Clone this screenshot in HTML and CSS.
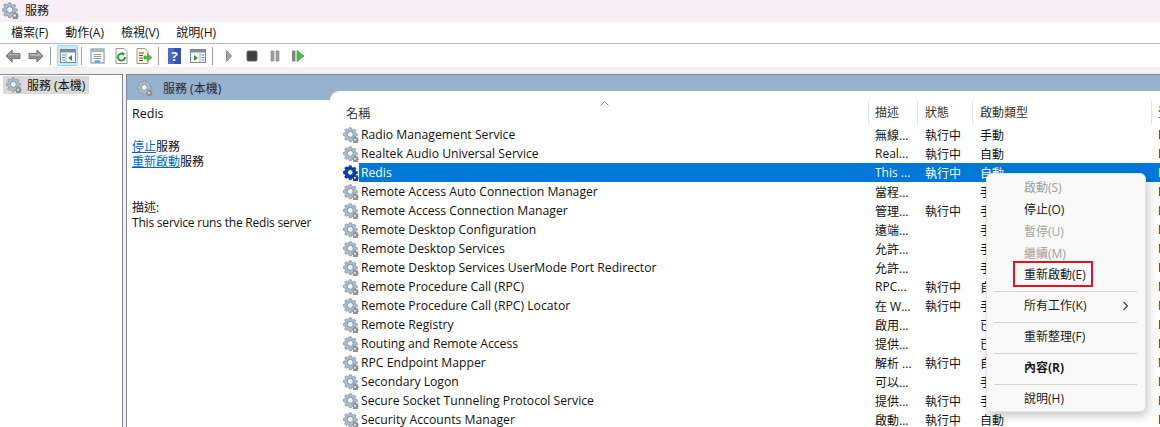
FILE: index.html
```html
<!DOCTYPE html>
<html lang="zh-Hant">
<head>
    <meta charset="UTF-8">
    <title>服務</title>
    <link rel="stylesheet" href="styles.css">
</head>
<body>
    <svg class="defs" width="0" height="0">
        <defs>
            <symbol id="gear" viewBox="0 0 18 18">
                <path d="M7 .8h2.400l.4 1.900 1.500.6 1.700-1 1.600 1.600-1 1.700.6 1.500 1.900.4v2.400l-1.900.4-.6 1.500 1 1.700-1.600 1.600-1.700-1-1.500.6-.4 1.900H7l-.4-1.900-1.500-.6-1.700 1-1.600-1.600 1-1.700-.6-1.500L.3 9.500V7.100l1.900-.4.6-1.500-1-1.700 1.600-1.600 1.700 1 1.500-.6z" fill="#a9bdd0" stroke="#7d8ea0" stroke-width=".7"/>
                <circle cx="8.200" cy="8.300" r="3.300" fill="#f4f8fb" stroke="#6f8296" stroke-width=".9"/>
                <path d="M12.500 10.500h1.800l.2 1 .8.3.8-.5 1 1-.5.8.3.8.7.2v1.500l-.7.2-.3.8.5.8-1 1H12l-1-1 .5-.8-.3-.8-.8-.2v-1.500l.8-.2.3-.8-.5-.8 1-1 .7.5z" fill="#8d8f92"/>
                <circle cx="13.400" cy="14.400" r="1.300" fill="#e8e8e8"/>
            </symbol>
            <symbol id="gear-on" viewBox="0 0 18 18">
                <path d="M7 .8h2.400l.4 1.900 1.500.6 1.700-1 1.600 1.600-1 1.700.6 1.500 1.900.4v2.400l-1.900.4-.6 1.500 1 1.700-1.600 1.600-1.700-1-1.500.6-.4 1.900H7l-.4-1.900-1.500-.6-1.700 1-1.600-1.600 1-1.700-.6-1.500L.3 9.500V7.100l1.900-.4.6-1.500-1-1.700 1.600-1.600 1.700 1 1.500-.6z" fill="#0a3fa8" stroke="#062a78" stroke-width=".7"/>
                <circle cx="8.200" cy="8.300" r="3.100" fill="#eaf2fb" stroke="#06246b" stroke-width=".9"/>
                <path d="M12.500 10.500h1.800l.2 1 .8.3.8-.5 1 1-.5.8.3.8.7.2v1.500l-.7.2-.3.8.5.8-1 1H12l-1-1 .5-.8-.3-.8-.8-.2v-1.500l.8-.2.3-.8-.5-.8 1-1 .7.5z" fill="#0b3d9e"/>
                <circle cx="13.400" cy="14.400" r="1.200" fill="#d9e6f7"/>
            </symbol>
        </defs>
    </svg>

    <div class="titlebar">
        <svg class="gear-title"><use href="#gear"/></svg>
        <span>服務</span>
    </div>

    <div class="menubar">
        <span>檔案(F)</span>
        <span>動作(A)</span>
        <span>檢視(V)</span>
        <span>說明(H)</span>
    </div>

    <div class="toolbar">
        <svg class="tool t-back" viewBox="0 0 18 16"><path d="M1 8l7-7v4h9v6H8v4z" fill="#8f8f8f" stroke="#6b6b6b"/><path d="M3 8l4-4v2h9v1H6z" fill="#b5b5b5"/></svg>
        <svg class="tool t-next" viewBox="0 0 18 16"><path d="M17 8l-7-7v4H1v6h9v4z" fill="#8f8f8f" stroke="#6b6b6b"/><path d="M2 6h9V4l4 4H2z" fill="#b5b5b5"/></svg>
        <i class="sep sep-1"></i>
        <span class="tool-on">
            <svg class="tool t-pane" viewBox="0 0 16 16"><rect x=".5" y="1.500" width="15" height="13" fill="#fff" stroke="#7a8794"/><rect x="1" y="2" width="14" height="2.500" fill="#7e8e9e"/><path d="M6 5v9" stroke="#9aa6b2"/><path d="M2 7h3M2 9.500h3M2 12h3" stroke="#4d88b8"/><path d="M12 7v6l-4-3z" fill="#2c9d3c"/></svg>
        </span>
        <i class="sep sep-2"></i>
        <svg class="tool t-list" viewBox="0 0 16 16" preserveAspectRatio="none"><rect x="1" y="1" width="14" height="14" fill="#f2f4f6" stroke="#7d8894"/><rect x="1.500" y="1.500" width="13" height="2.500" fill="#a9b4bf"/><path d="M4 6.500h8M4 8.500h8M4 10.500h8" stroke="#8f9aa5"/><path d="M5 13.500h6" stroke="#35a7e0" stroke-width="2"/></svg>
        <svg class="tool t-refresh" viewBox="1.500 0 13 16"><path d="M2.500.5h8l3 3v12h-11z" fill="#fbfbf8" stroke="#9a9a9a"/><path d="M11.500 9a3.500 3.500 0 1 1-1.500-2.800" fill="none" stroke="#2f9e3a" stroke-width="2"/><path d="M8.500 4l3 1.500-2 2.500z" fill="#2f9e3a"/></svg>
        <svg class="tool t-export" viewBox="0 0 16 16"><path d="M.5.500h8l3 3v12H.5z" fill="#f7f3dc" stroke="#a09c84"/><path d="M2.500 5h5M2.500 7.500h4M2.500 10h4M2.500 12.500h4" stroke="#555"/><path d="M7.500 8H11V5.500L15.500 9.500 11 13.500V11H7.500z" fill="#58b947" stroke="#3a9430" stroke-width=".5"/></svg>
        <i class="sep sep-3"></i>
        <svg class="tool t-help" viewBox="0 0 13 16"><rect width="13" height="16" fill="#3454b4"/><rect width="6" height="16" fill="#4a6cc8"/><text x="6.500" y="13" text-anchor="middle" class="help-mark">?</text></svg>
        <svg class="tool t-pane2" viewBox="0 0 16 16"><rect x=".5" y="1.500" width="15" height="13" fill="#fff" stroke="#7a8794"/><rect x="1" y="2" width="14" height="2.500" fill="#7e8e9e"/><path d="M10 5v9" stroke="#9aa6b2"/><path d="M11.500 7h3M11.500 9.500h3M11.500 12h3" stroke="#4d88b8"/><path d="M4 7v6l4-3z" fill="#2c9d3c"/></svg>
        <i class="sep sep-4"></i>
        <svg class="media" viewBox="0 0 14 14"><path d="M4.500 1.500l5 5.500-5 5.500z" fill="#a3a3a3" stroke="#8a8a8a"/></svg>
        <svg class="media" viewBox="0 0 14 14"><rect x="2" y="2" width="10" height="10" rx="1" fill="#3f3f3f" stroke="#6a6a6a"/></svg>
        <svg class="media" viewBox="0 0 14 14"><path d="M3 2h3v10H3zM8 2h3v10H8z" fill="#a0a0a0" stroke="#808080" stroke-width=".6"/></svg>
        <svg class="media" viewBox="0 0 14 14"><path d="M1.500 2h2.500v10H1.500z" fill="#8a8a8a" stroke="#555" stroke-width=".6"/><path d="M6 1.500l7 5.500-7 5.500z" fill="#3cc03c" stroke="#229a22" stroke-width=".6"/></svg>
    </div>

    <div class="band"></div>

    <div class="workspace">
        <aside class="tree">
            <div class="tree-item">
                <svg class="gear"><use href="#gear"/></svg>
                <span>服務 (本機)</span>
            </div>
        </aside>

        <main class="pane">
            <div class="pane-head">
                <svg class="gear"><use href="#gear"/></svg>
                <span>服務 (本機)</span>
            </div>
            <div class="pane-body">
                <section class="detail">
                    <h3>Redis</h3>
                    <p class="actions"><a>停止</a>服務<br><a>重新啟動</a>服務</p>
                    <p class="desc">描述:<br><span>This service runs the Redis server</span></p>
                </section>

                <section class="list">
                    <div class="sort-mark"><svg width="9" height="5" viewBox="0 0 9 5"><path d="M.5 4.500l4-4 4 4" fill="none" stroke="#8a8a8a"/></svg></div>
                    <div class="row head">
                        <span class="name">名稱</span>
                        <span class="d">描述</span>
                        <span class="s">狀態</span>
                        <span class="t">啟動類型</span>
                        <span class="l">登入身分</span>
                    </div>
                    <div class="row"><svg class="gear"><use href="#gear"/></svg><span class="name">Radio Management Service</span><span class="d">無線...</span><span class="s">執行中</span><span class="t">手動</span><span class="l">Local System</span></div>
                    <div class="row"><svg class="gear"><use href="#gear"/></svg><span class="name">Realtek Audio Universal Service</span><span class="d">Real...</span><span class="s">執行中</span><span class="t">自動</span><span class="l">Local System</span></div>
                    <div class="row selected"><svg class="gear"><use href="#gear-on"/></svg><span class="name">Redis</span><span class="d">This ...</span><span class="s">執行中</span><span class="t">自動</span><span class="l">Local System</span></div>
                    <div class="row"><svg class="gear"><use href="#gear"/></svg><span class="name">Remote Access Auto Connection Manager</span><span class="d">當程...</span><span class="s"></span><span class="t">手動</span><span class="l">Local System</span></div>
                    <div class="row"><svg class="gear"><use href="#gear"/></svg><span class="name">Remote Access Connection Manager</span><span class="d">管理...</span><span class="s">執行中</span><span class="t">手動</span><span class="l">Local System</span></div>
                    <div class="row"><svg class="gear"><use href="#gear"/></svg><span class="name">Remote Desktop Configuration</span><span class="d">遠端...</span><span class="s"></span><span class="t">手動</span><span class="l">Local System</span></div>
                    <div class="row"><svg class="gear"><use href="#gear"/></svg><span class="name">Remote Desktop Services</span><span class="d">允許...</span><span class="s"></span><span class="t">手動</span><span class="l">Network Service</span></div>
                    <div class="row"><svg class="gear"><use href="#gear"/></svg><span class="name">Remote Desktop Services UserMode Port Redirector</span><span class="d">允許...</span><span class="s"></span><span class="t">手動</span><span class="l">Local System</span></div>
                    <div class="row"><svg class="gear"><use href="#gear"/></svg><span class="name">Remote Procedure Call (RPC)</span><span class="d">RPC...</span><span class="s">執行中</span><span class="t">自動</span><span class="l">Network Service</span></div>
                    <div class="row"><svg class="gear"><use href="#gear"/></svg><span class="name">Remote Procedure Call (RPC) Locator</span><span class="d">在 W...</span><span class="s">執行中</span><span class="t">手動</span><span class="l">Network Service</span></div>
                    <div class="row"><svg class="gear"><use href="#gear"/></svg><span class="name">Remote Registry</span><span class="d">啟用...</span><span class="s"></span><span class="t">已停用</span><span class="l">Local Service</span></div>
                    <div class="row"><svg class="gear"><use href="#gear"/></svg><span class="name">Routing and Remote Access</span><span class="d">提供...</span><span class="s"></span><span class="t">已停用</span><span class="l">Local System</span></div>
                    <div class="row"><svg class="gear"><use href="#gear"/></svg><span class="name">RPC Endpoint Mapper</span><span class="d">解析 ...</span><span class="s">執行中</span><span class="t">自動</span><span class="l">Network Service</span></div>
                    <div class="row"><svg class="gear"><use href="#gear"/></svg><span class="name">Secondary Logon</span><span class="d">可以...</span><span class="s"></span><span class="t">手動</span><span class="l">Local System</span></div>
                    <div class="row"><svg class="gear"><use href="#gear"/></svg><span class="name">Secure Socket Tunneling Protocol Service</span><span class="d">提供...</span><span class="s">執行中</span><span class="t">手動</span><span class="l">Local Service</span></div>
                    <div class="row"><svg class="gear"><use href="#gear"/></svg><span class="name">Security Accounts Manager</span><span class="d">啟動...</span><span class="s">執行中</span><span class="t">自動</span><span class="l">Local System</span></div>
                </section>
            </div>
        </main>
    </div>

    <div class="ctx">
        <div class="ctx-item off">啟動(S)</div>
        <div class="ctx-item">停止(O)</div>
        <div class="ctx-item off">暫停(U)</div>
        <div class="ctx-item off">繼續(M)</div>
        <div class="ctx-item marked">重新啟動(E)</div>
        <hr>
        <div class="ctx-item more">所有工作(K)<svg width="7" height="10" viewBox="0 0 7 10"><path d="M1.500 1l4 4-4 4" fill="none" stroke="#444" stroke-width="1.200"/></svg></div>
        <hr>
        <div class="ctx-item">重新整理(F)</div>
        <hr>
        <div class="ctx-item strong">內容(R)</div>
        <hr>
        <div class="ctx-item">說明(H)</div>
    </div>
</body>
</html>
```

FILE: styles.css
```css
* {
    box-sizing: border-box;
}

html, body {
    height: 427px;
    overflow: hidden;
}

body {
    margin: 0;
    background-color: #f0f0f0;
    color: #111;
    font-family: 'Open Sans', 'Noto Sans CJK TC', sans-serif;
    font-size: 12px;
    position: relative;
}

.defs {
    display: block;
    height: 0;
}

.titlebar {
    height: 22px;
    background-color: #f8eef6;
    display: flex;
    align-items: center;
    padding: 0 0 2px 2px;
    gap: 6px;
}

.gear-title {
    width: 17px;
    height: 17px;
}

.menubar {
    height: 22px;
    background-color: #fff;
    border-bottom: 1px solid #b9b9b9;
    display: flex;
    align-items: center;
    padding: 0 0 2px 11px;
    gap: 17px;
}

/* toolbar margins follow the button groups of the mmc snap-in */
.toolbar {
    height: 23px;
    background-color: #fff;
    display: flex;
    align-items: center;
    padding-left: 5px;
}

.tool {
    height: 16px;
    flex: none;
}

.t-back {
    width: 16px;
    height: 14px;
    margin-right: 7px;
}

.t-next {
    width: 16px;
    height: 14px;
    margin-right: 6px;
}

.t-pane {
    width: 16px;
}

.t-list {
    width: 15px;
    margin-right: 10px;
}

.t-refresh {
    width: 13px;
    margin-right: 8px;
}

.t-export {
    width: 17px;
    margin-right: 5px;
}

.t-help {
    width: 13px;
    margin-right: 9px;
}

.t-pane2 {
    width: 16px;
    margin-right: 6px;
}

.help-mark {
    fill: #fff;
    font-size: 13px;
    font-weight: 700;
}

.sep {
    width: 1px;
    height: 18px;
    background-color: #a0a0a0;
    flex: none;
}

.sep-1 {
    margin-right: 6px;
}

.sep-2 {
    margin: 0 8px 0 3px;
}

.sep-3 {
    margin-right: 9px;
}

.sep-4 {
    margin-right: 9px;
}

.tool-on {
    width: 21px;
    height: 21px;
    background-color: #cce8ff;
    border: 1px solid #99d1ff;
    border-radius: 2px;
    display: flex;
    align-items: center;
    justify-content: center;
    flex: none;
}

.media {
    width: 14px;
    height: 14px;
    margin-right: 9px;
    flex: none;
}

.band {
    height: 7px;
    background-color: #f0f0f0;
}

.workspace {
    display: flex;
    gap: 3px;
    height: 353px;
}

.tree {
    width: 123px;
    background-color: #fff;
    border: 1px solid #828790;
    border-left: 0;
    border-bottom: 0;
    padding: 1px 0 0 3px;
}

.tree-item {
    width: 86px;
    height: 18px;
    background-color: #d9d9d9;
    display: flex;
    align-items: center;
    gap: 5px;
    padding-left: 3px;
}

.gear {
    width: 16px;
    height: 16px;
    flex: none;
}

.pane {
    flex: 1;
    min-width: 0;
    border-left: 1px solid #828790;
    border-top: 1px solid #828790;
    background-color: #fff;
}

.pane-head {
    height: 25px;
    background-color: #97b2ce;
    display: flex;
    align-items: center;
    padding: 1px 0 0 10px;
    gap: 10px;
    color: #1f2a35;
}

.pane-body {
    display: flex;
    background-color: #97b2ce;
    height: 327px;
}

.detail {
    width: 203px;
    flex: none;
    background-color: #fff;
    padding: 5px 5px 0 5px;
}

.detail h3 {
    margin: 0 0 17px;
    font-size: 12.500px;
    font-weight: 400;
    line-height: 17px;
}

.detail p {
    margin: 0;
    line-height: 15px;
}

.detail a {
    color: #0066cc;
    text-decoration: underline;
}

.detail .actions {
    margin-bottom: 31px;
}

.desc span {
    letter-spacing: -0.2px;
    white-space: nowrap;
}

.list {
    flex: 1;
    min-width: 0;
    background-color: #fff;
    border-radius: 9px 0 0 0;
    margin-top: -9px;
    padding-top: 9px;
    position: relative;
    overflow: hidden;
}

.sort-mark {
    position: absolute;
    left: 270px;
    top: 10px;
    line-height: 0;
}

.row {
    height: 19px;
    display: flex;
    align-items: center;
    white-space: nowrap;
    padding-left: 13px;
}

.row .gear {
    margin-right: 2px;
}

.row span {
    flex: none;
    overflow: hidden;
}

.row .name {
    width: 514px;
    font-size: 12.200px;
}

.row .d {
    width: 50px;
}

.row .s {
    width: 55px;
}

.row .t {
    width: 178px;
}

.row.head {
    height: 25px;
    padding-left: 16px;
    color: #333;
}

.row.head .name {
    width: 522px;
}

.row.head span + span {
    border-left: 1px solid #e5e5e5;
    padding-left: 7px;
    height: 24px;
    line-height: 24px;
}

.row.head .d {
    width: 49px;
    padding-left: 6px;
}

.row.head .s {
    width: 55px;
}

.row.head .t {
    width: 179px;
}

.row.head .l {
    padding-left: 6px;
}

.row.selected {
    color: #fff;
    background: linear-gradient(90deg, #fff 29px, #0078d7 29px);
}

.ctx {
    position: absolute;
    left: 986px;
    top: 173px;
    width: 160px;
    height: 239px;
    background-color: #f9f9f9;
    border: 1px solid #e4e4e4;
    border-radius: 6px;
    box-shadow: 2px 4px 10px rgba(0, 0, 0, 0.22);
    padding-top: 3px;
}

.ctx hr {
    height: 1px;
    border: 0;
    background-color: #d4d4d4;
    margin: 5px 8px 3px 7px;
}

.ctx-item {
    height: 22px;
    line-height: 22px;
    padding-left: 37px;
    color: #1a1a1a;
}

.ctx-item.off {
    color: #a0a0a0;
}

.ctx-item.strong {
    font-weight: 700;
}

.ctx-item.more {
    display: flex;
    align-items: center;
    justify-content: space-between;
    padding-right: 16px;
    margin-top: -1px;
    height: 23px;
}

.ctx-item.marked {
    height: 21px;
    line-height: 20px;
    position: relative;
}

/* red annotation box drawn over the screenshot */
.ctx-item.marked::after {
    content: "";
    box-sizing: border-box;
    position: absolute;
    left: 26px;
    top: -4px;
    width: 80px;
    height: 26px;
    border: 2px solid #e81123;
}
```
